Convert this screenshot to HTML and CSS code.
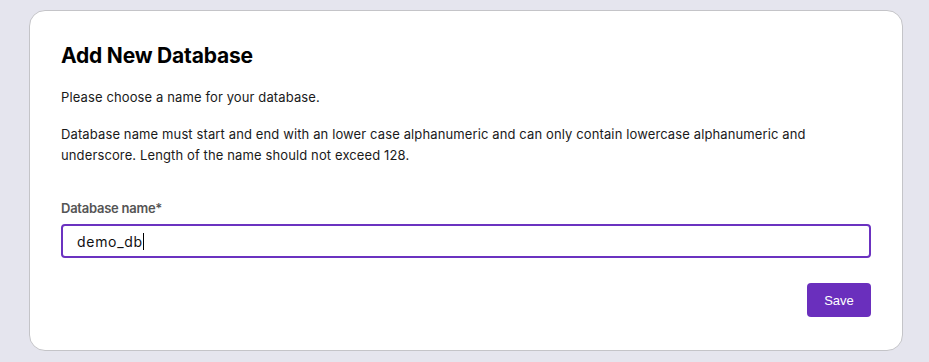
FILE: index.html
```html
<!DOCTYPE html>
<html lang="en">
<head>
<meta charset="utf-8">
<link rel="stylesheet" href="styles.css">
</head>
<body>
<div class="card">
  <h1 class="title">Add New Database</h1>
  <p class="text p1">Please choose a name for your database.</p>
  <p class="text p2">Database name must start and end with an lower case alphanumeric and can only contain lowercase alphanumeric and underscore. Length of the name should not exceed 128.</p>
  <label class="label" for="dbname">Database name*</label>
  <div class="input"><span class="value">demo_db</span><span class="caret"></span></div>
  <div class="actions"><button class="save">Save</button></div>
</div>
</body>
</html>
```
FILE: styles.css
```css
html, body {
  margin: 0;
  padding: 0;
  background: #e5e5ee;
  height: 100%;
}
body {
  padding: 10px 26px 0 29px;
  font-family: "Inter", "Liberation Sans", sans-serif;
  color: #111;
}
.card {
  box-sizing: border-box;
  width: 874px;
  height: 341px;
  background: #fff;
  border: 1px solid #c4c4c8;
  border-radius: 16px;
  padding: 31px 31px 0 31px;
  display: flex;
  flex-direction: column;
}
.title {
  margin: 0;
  font-size: 21px;
  line-height: 28px;
  font-weight: 700;
  color: #000;
  letter-spacing: -0.2px;
}
.text {
  margin: 0;
  font-size: 13px;
  line-height: 21px;
  color: #1a1a1a;
  letter-spacing: 0.12px;
}
.p1 { margin-top: 17px; }
.p2 { margin-top: 16px; }
.label {
  margin-top: 32px;
  font-size: 13px;
  line-height: 20px;
  font-weight: 600;
  color: #555;
  letter-spacing: -0.25px;
}
.input {
  margin-top: 6px;
  box-sizing: border-box;
  height: 34px;
  border: 2px solid #6b32c0;
  border-radius: 4px;
  display: flex;
  align-items: center;
  padding-left: 14px;
  font-size: 14px;
  color: #111;
  letter-spacing: 0.7px;
}
.caret {
  width: 1px;
  height: 17px;
  background: #000;
}
.actions {
  margin-top: 25px;
  display: flex;
  justify-content: flex-end;
}
.save {
  width: 64px;
  height: 34px;
  border: none;
  border-radius: 4px;
  background: #6a2fbd;
  color: #fff;
  font-family: "Liberation Sans", Arial, sans-serif;
  font-size: 13px;
  font-weight: 500;
}
```
